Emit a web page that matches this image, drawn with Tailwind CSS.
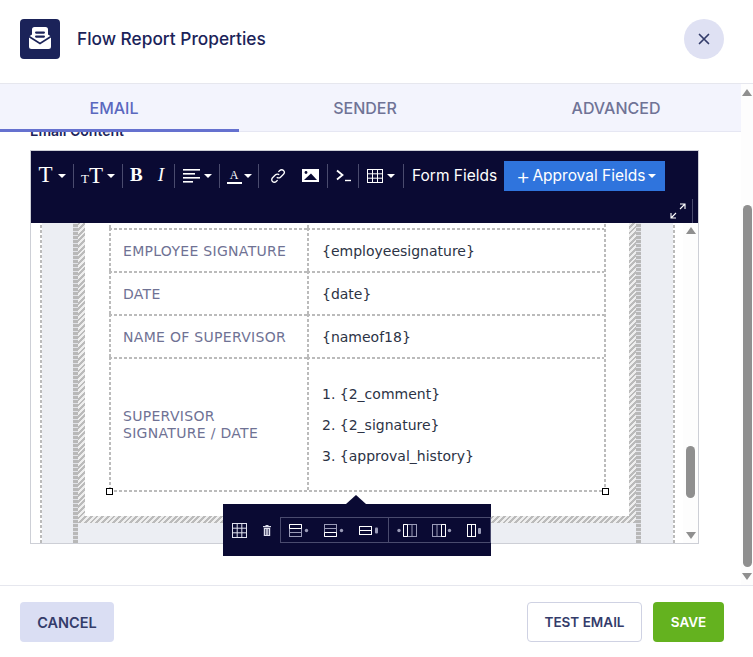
<!DOCTYPE html>
<html lang="en">
<head>
  <meta charset="UTF-8">
  <title>Flow Report Properties</title>
  <script src="https://cdn.jsdelivr.net/npm/@tailwindcss/browser@4"></script>
</head>
<body class="bg-white font-['Inter',sans-serif] overflow-hidden">
<div class="relative w-[753px] h-[657px] flex flex-col overflow-hidden">

  <!-- header -->
  <div class="h-[84px] shrink-0 border-b border-[#e6e7ee] flex items-start justify-between pt-[19px] pl-[20px] pr-[29px]">
    <div class="flex items-center gap-[17px]">
      <div class="w-[40px] h-[40px] rounded-[4px] bg-[#1b2359] flex items-center justify-center">
        <svg width="24" height="24" viewBox="0 0 24 24">
          <path d="M1 10.5 L4 8.5 V3.5 Q4 1 6.5 1 H17.5 Q20 1 20 3.5 V8.5 L23 10.5 V20.5 Q23 23 20.5 23 H3.5 Q1 23 1 20.5 Z" fill="#fff" transform="translate(0 -1)"/>
          <path d="M1 9.5 L12 16.5 L23 9.5" fill="none" stroke="#1b2359" stroke-width="1.6"/>
          <rect x="7" y="4.5" width="10" height="2.2" rx="1.1" fill="#1b2359"/>
          <rect x="7" y="8.5" width="10" height="2.2" rx="1.1" fill="#1b2359"/>
        </svg>
      </div>
      <div class="text-[17.3px] font-medium text-[#1b2359] leading-[40px]">Flow Report Properties</div>
    </div>
    <button class="w-[40px] h-[40px] rounded-full bg-[#dfe1f3] flex items-center justify-center">
      <svg width="12" height="12" viewBox="0 0 12 12"><path d="M1.5 1.5 L10.5 10.5 M10.5 1.5 L1.5 10.5" stroke="#343c6a" stroke-width="1.7" stroke-linecap="round"/></svg>
    </button>
  </div>

  <!-- body -->
  <div class="h-[501px] shrink-0 flex">
    <div class="w-[741px] shrink-0 flex flex-col overflow-hidden">
      <div class="relative z-10 h-[48px] shrink-0 flex bg-[#f3f4fd] border-b border-[#e6e7f3] text-[16px] font-medium">
        <div class="w-[239px] h-[48px] pr-[11px] pt-[3px] flex items-center justify-center text-[#5a68bf] border-b-[3px] border-[#6571cf]">EMAIL</div>
        <div class="w-[252px] flex items-center justify-center text-[#6f7396]">SENDER</div>
        <div class="flex-1 flex items-center justify-center text-[#6f7396]">ADVANCED</div>
      </div>
      <div class="-mt-[10px] h-[18px] mb-[10px] pl-[30px] text-[14px] leading-[18px] font-semibold text-[#1b2359]">Email Content</div>

      <!-- editor -->
      <div class="relative ml-[30px] w-[669px] h-[394px] border border-[#cdcfd6] flex flex-col bg-white">
        <div class="h-[72px] shrink-0 bg-[#0a0a33] text-white flex flex-col">
          <div class="flex items-center h-[48px] pt-[1px]">
            <div class="w-[43px] h-[24px] flex items-center justify-center gap-[5px] border-r border-[#4a4b6e] font-['Liberation_Serif',serif] text-[23px]"><span>T</span><i class="w-0 h-0 border-x-[4px] border-x-transparent border-t-[4px] border-t-white"></i></div>
            <div class="w-[49px] h-[24px] flex items-center justify-center gap-[4px] border-r border-[#4a4b6e] font-['Liberation_Serif',serif] text-[23px]"><span class="flex items-end"><span class="text-[13px] leading-[18px]">T</span><span class="leading-[24px]">T</span></span><i class="w-0 h-0 border-x-[4px] border-x-transparent border-t-[4px] border-t-white"></i></div>
            <div class="w-[52px] h-[24px] flex items-center pl-[7px] gap-[15px] border-r border-[#4a4b6e] font-['Liberation_Serif',serif] text-[19px]"><b>B</b><em>I</em></div>
            <div class="w-[45px] h-[24px] flex items-center justify-center gap-[4px] border-r border-[#4a4b6e]">
              <svg width="17" height="14" viewBox="0 0 17 14" fill="#fff"><rect y="0" width="17" height="1.6"/><rect y="4" width="12" height="1.6"/><rect y="8" width="17" height="1.6"/><rect y="12" width="10" height="1.6"/></svg>
              <i class="w-0 h-0 border-x-[4px] border-x-transparent border-t-[4px] border-t-white"></i>
            </div>
            <div class="w-[39px] h-[24px] flex items-center justify-center gap-[2px] border-r border-[#4a4b6e]">
              <span class="font-['Liberation_Serif',serif] text-[12px] leading-[14px] border-b-2 border-white w-[15px] text-center">A</span>
              <i class="w-0 h-0 border-x-[4px] border-x-transparent border-t-[4px] border-t-white"></i>
            </div>
            <div class="w-[69px] h-[24px] flex items-center pl-[11px] gap-[16px] border-r border-[#4a4b6e]">
              <svg width="16" height="16" viewBox="0 0 16 16" fill="none" stroke="#fff" stroke-width="1.3"><path d="M6.8 9.2 a2.6 2.6 0 0 0 3.7 0 l3-3 a2.6 2.6 0 0 0 -3.7 -3.7 l-1.4 1.4"/><path d="M9.2 6.8 a2.6 2.6 0 0 0 -3.7 0 l-3 3 a2.6 2.6 0 0 0 3.7 3.7 l1.4 -1.4"/></svg>
              <svg width="17" height="13" viewBox="0 0 17 13"><rect width="17" height="13" fill="#fff"/><circle cx="4" cy="3.5" r="1.4" fill="#0a0a33"/><path d="M2 11 L9 4.5 L15 11 Z" fill="#0a0a33"/></svg>
            </div>
            <div class="w-[31px] h-[24px] flex items-center justify-center border-r border-[#4a4b6e]">
              <svg width="15" height="13" viewBox="0 0 15 13" fill="none" stroke="#fff"><path d="M1 1.5 L6.5 6 L1 10.5" stroke-width="1.8"/><path d="M9 11.5 H15" stroke-width="1.4"/></svg>
            </div>
            <div class="w-[45px] h-[24px] flex items-center justify-center gap-[4px] border-r border-[#4a4b6e]">
              <svg width="16" height="14" viewBox="0 0 16 14" fill="none" stroke="#fff" stroke-width="1"><rect x=".5" y=".5" width="15" height="13"/><path d="M5.5 .5 V13.5 M10.5 .5 V13.5 M.5 4.8 H15.5 M.5 9.2 H15.5"/></svg>
              <i class="w-0 h-0 border-x-[4px] border-x-transparent border-t-[4px] border-t-white"></i>
            </div>
            <div class="pl-[8px] w-[100px] text-[15.5px] font-normal whitespace-nowrap">Form Fields</div>
            <button class="w-[161px] h-[30px] bg-[#2f74dd] flex items-center gap-[2px] pl-[12px] text-[15.5px] whitespace-nowrap">
              <span class="text-[22px] leading-[22px] font-light">+</span><span>Approval Fields</span>
              <i class="ml-[1px] w-0 h-0 border-x-[4px] border-x-transparent border-t-[4px] border-t-white"></i>
            </button>
          </div>
          <div class="flex justify-end items-center h-[24px] pr-[5px] gap-[6px]">
            <svg width="16" height="16" viewBox="0 0 16 16" fill="none" stroke="#fff" stroke-width="1.1"><path d="M1 15 L6 10 M1 10 V15 H6 M10 6 L15 1 M10 1 H15 V6"/></svg>
            <div class="w-px h-[24px] bg-[#4a4b6e]"></div>
          </div>
        </div>

        <!-- canvas -->
        <div class="flex-1 flex min-h-0 overflow-hidden">
          <div class="w-[652px] shrink-0 pl-[9px] pr-[8px] flex">
            <div class="w-[2px] h-full bg-[repeating-linear-gradient(0deg,#bbbbbb_0,#bbbbbb_3px,transparent_3px,transparent_5px)]"></div>
            <div class="flex-1 flex bg-[#eceef3] pl-[31px] pr-[32px]">
              <div class="w-[5px] h-full bg-[repeating-linear-gradient(0deg,#b8b8b8_0,#b8b8b8_3px,#e2e3e8_3px,#e2e3e8_4px)]"></div>
              <div class="w-[558px]">
                <div class="h-[300px] px-[7px] pb-[7px] bg-[repeating-linear-gradient(135deg,#bbbbbb_0,#bbbbbb_2px,#eeeeee_2px,#eeeeee_4px)]">
                  <div class="h-full bg-white pl-[24px] overflow-hidden">
                    <div class="w-[497px] h-[269px] [background:repeating-linear-gradient(0deg,#bbb_0_3px,transparent_3px_5px)_right/2px_100%_no-repeat,repeating-linear-gradient(90deg,#bbb_0_3px,transparent_3px_5px)_bottom/100%_2px_no-repeat]">
                    <table class="w-[495px] border-separate border-spacing-0 font-['DejaVu_Sans',sans-serif] text-[14px] table-fixed">
                      <tbody>
                        <tr class="h-[5px]">
                          <td class="w-[198px] [background:repeating-linear-gradient(0deg,#bbb_0_3px,transparent_3px_5px)_left/2px_100%_no-repeat]"></td>
                          <td class="[background:repeating-linear-gradient(0deg,#bbb_0_3px,transparent_3px_5px)_left/2px_100%_no-repeat]"></td>
                        </tr>
                        <tr class="h-[43px]">
                          <td class="pl-[14px] pt-[3px] tracking-[0.3px] text-[#6f7294] [background:repeating-linear-gradient(90deg,#bbb_0_3px,transparent_3px_5px)_top/100%_2px_no-repeat,repeating-linear-gradient(0deg,#bbb_0_3px,transparent_3px_5px)_left/2px_100%_no-repeat]">EMPLOYEE SIGNATURE</td>
                          <td class="pl-[15px] pt-[3px] text-[#2c3345] [background:repeating-linear-gradient(90deg,#bbb_0_3px,transparent_3px_5px)_top/100%_2px_no-repeat,repeating-linear-gradient(0deg,#bbb_0_3px,transparent_3px_5px)_left/2px_100%_no-repeat]">{employeesignature}</td>
                        </tr>
                        <tr class="h-[43px]">
                          <td class="pl-[14px] pt-[3px] tracking-[0.3px] text-[#6f7294] [background:repeating-linear-gradient(90deg,#bbb_0_3px,transparent_3px_5px)_top/100%_2px_no-repeat,repeating-linear-gradient(0deg,#bbb_0_3px,transparent_3px_5px)_left/2px_100%_no-repeat]">DATE</td>
                          <td class="pl-[15px] pt-[3px] text-[#2c3345] [background:repeating-linear-gradient(90deg,#bbb_0_3px,transparent_3px_5px)_top/100%_2px_no-repeat,repeating-linear-gradient(0deg,#bbb_0_3px,transparent_3px_5px)_left/2px_100%_no-repeat]">{date}</td>
                        </tr>
                        <tr class="h-[43px]">
                          <td class="pl-[14px] pt-[3px] tracking-[0.3px] text-[#6f7294] [background:repeating-linear-gradient(90deg,#bbb_0_3px,transparent_3px_5px)_top/100%_2px_no-repeat,repeating-linear-gradient(0deg,#bbb_0_3px,transparent_3px_5px)_left/2px_100%_no-repeat]">NAME OF SUPERVISOR</td>
                          <td class="pl-[15px] pt-[3px] text-[#2c3345] [background:repeating-linear-gradient(90deg,#bbb_0_3px,transparent_3px_5px)_top/100%_2px_no-repeat,repeating-linear-gradient(0deg,#bbb_0_3px,transparent_3px_5px)_left/2px_100%_no-repeat]">{nameof18}</td>
                        </tr>
                        <tr class="h-[133px]">
                          <td class="pl-[14px] pt-[3px] tracking-[0.3px] text-[#6f7294] leading-[17px] [background:repeating-linear-gradient(90deg,#bbb_0_3px,transparent_3px_5px)_top/100%_2px_no-repeat,repeating-linear-gradient(0deg,#bbb_0_3px,transparent_3px_5px)_left/2px_100%_no-repeat]">SUPERVISOR<br>SIGNATURE / DATE</td>
                          <td class="pl-[15px] pt-[3px] text-[#2c3345] [background:repeating-linear-gradient(90deg,#bbb_0_3px,transparent_3px_5px)_top/100%_2px_no-repeat,repeating-linear-gradient(0deg,#bbb_0_3px,transparent_3px_5px)_left/2px_100%_no-repeat]">
                            <div class="flex flex-col gap-[10px] leading-[21px]"><div>1. {2_comment}</div><div>2. {2_signature}</div><div>3. {approval_history}</div></div>
                          </td>
                        </tr>
                      </tbody>
                    </table>
                    </div>
                  </div>
                </div>
              </div>
              <div class="w-[5px] h-full bg-[repeating-linear-gradient(0deg,#b8b8b8_0,#b8b8b8_3px,#e2e3e8_3px,#e2e3e8_4px)]"></div>
            </div>
            <div class="w-[2px] h-full bg-[repeating-linear-gradient(0deg,#bbbbbb_0,#bbbbbb_3px,transparent_3px,transparent_5px)]"></div>
          </div>
          <!-- inner scrollbar -->
          <div class="w-[15px] shrink-0 bg-[#fdfdfd] flex flex-col items-center justify-between py-[4px]">
            <i class="w-0 h-0 border-x-[5px] border-x-transparent border-b-[7px] border-b-[#8f8f8f]"></i>
            <div class="flex flex-col items-center gap-[34px]">
              <div class="w-[9px] h-[52px] rounded-full bg-[#8f8f8f]"></div>
              <i class="w-0 h-0 border-x-[5px] border-x-transparent border-t-[7px] border-t-[#8f8f8f]"></i>
            </div>
          </div>
        </div>

        <!-- selection handles -->
        <div class="absolute left-[75px] top-[337px] w-[7px] h-[7px] bg-white border border-black"></div>
        <div class="absolute left-[571px] top-[337px] w-[7px] h-[7px] bg-white border border-black"></div>

        <!-- table popup -->
        <div class="absolute left-[192px] top-[353px] w-[268px] h-[52px] bg-[#0a0a33] flex items-center z-20">
          <div class="absolute -top-[9px] left-[123px] w-0 h-0 border-x-[10px] border-x-transparent border-b-[9px] border-b-[#0a0a33]"></div>
          <div class="w-[57px] flex items-center pl-[9px] gap-[16px]">
            <svg width="15" height="15" viewBox="0 0 15 15" fill="none" stroke="#dfe0ee"><rect x=".5" y=".5" width="14" height="14"/><path d="M5.2 .5 V14.5 M9.8 .5 V14.5 M.5 5.2 H14.5 M.5 9.8 H14.5"/></svg>
            <svg width="8" height="11" viewBox="0 0 8 11" fill="#dfe0ee"><rect x="0" y="1" width="8" height="1.2"/><rect x="2.5" y="0" width="3" height="1.2"/><path d="M.8 2.8 H7.2 V11 H.8 Z M2.4 4 V10 H3.2 V4 Z M4.8 4 V10 H5.6 V4 Z" fill-rule="evenodd"/></svg>
          </div>
          <div class="w-[109px] h-[26px] border border-[#4a4b6e] flex items-center pl-[8px] gap-[15px]">
            <svg width="20" height="13" viewBox="0 0 20 13" fill="none"><rect x=".5" y=".5" width="12" height="12" stroke="#9b9cb8"/><path d="M.5 .5 H12.5 V4.5 H.5 Z" stroke="#fff"/><path d="M.5 8.5 H12.5" stroke="#9b9cb8"/><circle cx="17.5" cy="6.5" r="1.7" fill="#9b9cb8"/></svg>
            <svg width="20" height="13" viewBox="0 0 20 13" fill="none"><rect x=".5" y=".5" width="12" height="12" stroke="#9b9cb8"/><path d="M.5 4.5 H12.5" stroke="#9b9cb8"/><path d="M.5 8.5 H12.5 V12.5 H.5 Z" stroke="#fff"/><circle cx="17.5" cy="6.5" r="1.7" fill="#9b9cb8"/></svg>
            <svg width="20" height="9" viewBox="0 0 20 9" fill="none"><rect x=".5" y=".5" width="12" height="8" stroke="#fff"/><path d="M.5 4.5 H12.5" stroke="#fff"/><rect x="16" y="1.5" width="3" height="6" rx="1" fill="#9b9cb8"/></svg>
          </div>
          <div class="w-[102px] h-[26px] border-y border-r border-[#4a4b6e] flex items-center pl-[8px] gap-[15px]">
            <svg width="20" height="13" viewBox="0 0 20 13" fill="none"><circle cx="2" cy="6.5" r="1.7" fill="#9b9cb8"/><rect x="6.5" y=".5" width="13" height="12" stroke="#9b9cb8"/><path d="M6.5 .5 H10.5 V12.5 H6.5 Z" stroke="#fff"/><path d="M15 .5 V12.5" stroke="#9b9cb8"/></svg>
            <svg width="20" height="13" viewBox="0 0 20 13" fill="none"><rect x=".5" y=".5" width="13" height="12" stroke="#9b9cb8"/><path d="M9.5 .5 H13.5 V12.5 H9.5 Z" stroke="#fff"/><path d="M5 .5 V12.5" stroke="#9b9cb8"/><circle cx="17.5" cy="6.5" r="1.7" fill="#9b9cb8"/></svg>
            <svg width="14" height="13" viewBox="0 0 14 13" fill="none"><rect x=".5" y=".5" width="8" height="12" stroke="#fff"/><path d="M4.5 .5 V12.5" stroke="#fff"/><rect x="11" y="4" width="3" height="6" rx="1" fill="#9b9cb8"/></svg>
          </div>
        </div>
      </div>
    </div>

    <!-- outer scrollbar -->
    <div class="w-[12px] shrink-0 bg-[#fdfdfd] flex flex-col items-center pt-[5px]">
      <i class="w-0 h-0 border-x-[5px] border-x-transparent border-b-[7px] border-b-[#8f8f8f]"></i>
      <div class="mt-[109px] w-[9px] h-[362px] rounded-full bg-[#8f8f8f]"></div>
      <i class="mt-[6px] w-0 h-0 border-x-[5px] border-x-transparent border-t-[7px] border-t-[#8f8f8f]"></i>
    </div>
  </div>

  <!-- footer -->
  <div class="flex-1 border-t border-[#e6e7ee] flex items-start justify-between pt-[16px] pl-[20px] pr-[29px] text-[13.5px] font-semibold">
    <button class="w-[94px] h-[40px] pt-[1px] rounded-[4px] bg-[#dadef3] text-[#343c6a] text-[14.5px]">CANCEL</button>
    <div class="flex gap-[11px]">
      <button class="w-[115px] h-[40px] pt-[1px] rounded-[4px] bg-white border border-[#cfd2e3] text-[#343c6a]">TEST EMAIL</button>
      <button class="w-[71px] h-[40px] pt-[1px] rounded-[4px] bg-[#64b21f] text-white">SAVE</button>
    </div>
  </div>
</div>
</body>
</html>
